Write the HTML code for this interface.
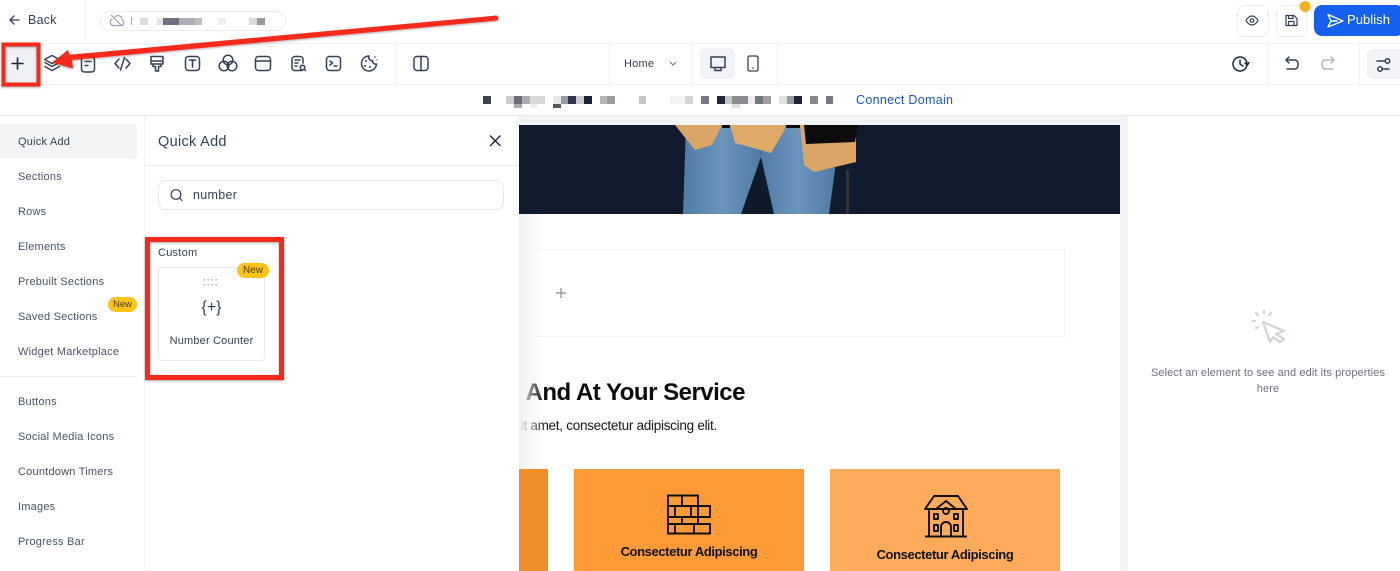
<!DOCTYPE html>
<html><head><meta charset="utf-8"><title>Builder</title>
<style>
html,body{margin:0;padding:0;background:#fff;}
#p{position:relative;width:1400px;height:571px;overflow:hidden;background:#fff;font-family:"Liberation Sans",sans-serif;color:#344054;}
#p div{position:absolute;box-sizing:border-box;white-space:nowrap;}
.nav{left:18px;font-size:11px;letter-spacing:.22px;line-height:14px;color:#475467;}
svg{position:absolute;left:0;top:0;}
.i{fill:none;stroke:#344054;stroke-width:1.5;stroke-linecap:round;stroke-linejoin:round;}
</style></head><body><div id="p">
<!-- canvas -->
<div style="left:518px;top:116px;width:610px;height:455px;background:#f2f3f5"></div>
<div style="left:519px;top:214px;width:601px;height:357px;background:#fff"></div>
<div style="left:519px;top:125px;width:601px;height:89px;background:#101c2e"></div>
<div style="left:1128px;top:116px;width:272px;height:455px;background:#fff"></div>
<!-- section content -->
<div style="left:519px;top:249px;width:546px;height:88px;border:1px solid #f3f3f5;border-left:0"></div>
<div style="left:519px;top:375px;width:226px;height:36px;overflow:hidden"><div style="right:0;top:0;font-size:24px;line-height:36px;font-weight:bold;color:#0b0b0b;letter-spacing:-.5px">Present And At Your Service</div></div>
<div style="left:519px;top:416px;width:198px;height:20px;overflow:hidden"><div style="right:0;top:0;font-size:13.5px;line-height:20px;color:#161616;letter-spacing:-.27px">Lorem ipsum dolor sit amet, consectetur adipiscing elit.</div></div>
<div style="left:519px;top:469px;width:29px;height:102px;background:#ee8f2b"></div>
<div style="left:574px;top:469px;width:230px;height:102px;background:#ff9a36"></div>
<div style="left:830px;top:469px;width:230px;height:102px;background:#ffab5c"></div>
<div style="left:574px;top:543px;width:230px;text-align:center;font-size:13px;line-height:18px;font-weight:bold;color:#111;letter-spacing:-.39px">Consectetur Adipiscing</div>
<div style="left:830px;top:546px;width:230px;text-align:center;font-size:13px;line-height:18px;font-weight:bold;color:#111;letter-spacing:-.39px">Consectetur Adipiscing</div>
<div style="left:519px;top:214px;width:26px;height:255px;background:linear-gradient(90deg,#f1f1f2,rgba(255,255,255,0))"></div>

<svg width="1400" height="571" viewBox="0 0 1400 571">
 <defs><linearGradient id="j" x1="0" x2="1" y1="0" y2="0"><stop offset="0" stop-color="#4f7ba6"/><stop offset=".5" stop-color="#6b95bb"/><stop offset="1" stop-color="#4f7ba6"/></linearGradient></defs>
 <!-- hero figure -->
 <path fill="url(#j)" d="M686 125L683 214H741L761 157L760 125Z"/>
 <path fill="url(#j)" d="M761 157L774 214H829L835 170L832 125H760Z"/>
 <path fill="#0f1a2b" d="M760 160L743 214H773Z"/>
 <path fill="#dba565" d="M675 125H722L712 145L695 150Z"/>
 <path fill="#dfa968" d="M730 125H786L784 131L771 153L735 143Z"/>
 <path fill="#0c0c0c" d="M722 125H730V128H722ZM786 125H800V128H786Z"/>
 <path fill="#dba565" d="M800 125H856V162L814 172L804 165Z"/>
 <path fill="#0c0c0c" d="M804 125H858L855 142L806 144Z"/>
 <path fill="#333" d="M846 170H849V214H846Z"/>
 <!-- plus in section -->
 <path d="M561 288V298M556 293H566" stroke="#868c92" stroke-width="1.2" fill="none"/>
 <!-- brick -->
 <g fill="none" stroke="#111" stroke-width="1.9">
  <path d="M668 495.500H698V506H710V517H698V524H710V533.500H668Z"/>
  <path d="M668 506H698M668 517H710M668 524H710M682 495.500V506M675 506V517M691 506V517M682 517V524M698 506V517M675 524V533.500M694 524V533.500"/>
 </g>
 <!-- house -->
 <g fill="none" stroke="#111" stroke-width="1.9" stroke-linejoin="round">
  <path d="M925 509L934 496H958L967 509Z"/>
  <path d="M929 509V536M963 509V536M925 536.500H967"/>
  <path d="M936 509L946 501L956 509"/>
  <circle cx="946" cy="511" r="3"/>
  <rect x="934" y="514" width="4" height="5"/><rect x="954" y="514" width="4" height="5"/>
  <rect x="934" y="525" width="4" height="6"/><rect x="954" y="525" width="4" height="6"/>
  <path d="M941 536V527A5 5 0 0 1 951 527V536"/>
 </g>
 <!-- pointer in right panel -->
 <g fill="none" stroke="#cfd3da" stroke-width="2.2" stroke-linecap="round" stroke-linejoin="round">
  <path d="M1263 322L1284 331L1276 334L1284 339L1280 342L1273 337L1270 342Z"/>
  <path d="M1264 311V313M1256 313L1258 315M1271 313L1269 315M1253 321H1255M1256 328L1258 327"/>
 </g>
</svg>

<!-- right panel text -->
<div style="left:1148px;top:365px;width:240px;text-align:center;font-size:11px;line-height:16px;color:#6b7280;letter-spacing:.1px;white-space:normal">Select an element to see and edit its properties here</div>

<!-- left panel -->
<div style="left:0;top:116px;width:145px;height:455px;background:#fff;border-right:1px solid #f2f3f4"></div>
<div style="left:145px;top:116px;width:374px;height:455px;background:#fff"></div>
<div style="left:0;top:124px;width:137px;height:35px;background:#f3f4f6;border-radius:0 4px 4px 0"></div>
<div class="nav" style="top:135px;color:#344054">Quick Add</div>
<div class="nav" style="top:170px">Sections</div>
<div class="nav" style="top:205px">Rows</div>
<div class="nav" style="top:240px">Elements</div>
<div class="nav" style="top:275px">Prebuilt Sections</div>
<div class="nav" style="top:310px">Saved Sections</div>
<div class="nav" style="top:345px">Widget Marketplace</div>
<div style="left:0;top:376px;width:137px;height:1px;background:#eef0f2"></div>
<div class="nav" style="top:395px">Buttons</div>
<div class="nav" style="top:430px">Social Media Icons</div>
<div class="nav" style="top:465px">Countdown Timers</div>
<div class="nav" style="top:500px">Images</div>
<div class="nav" style="top:535px">Progress Bar</div>
<div style="left:108px;top:297px;width:29px;height:15px;border-radius:8px;background:#fcc419;font-size:9.5px;line-height:15px;text-align:center;color:#4a3b05">New</div>

<div style="left:145px;top:165px;width:374px;height:1px;background:#eef0f2"></div>
<div style="left:158px;top:133px;font-size:14.5px;line-height:18px;letter-spacing:.3px;color:#344054">Quick Add</div>
<div style="left:158px;top:180px;width:346px;height:30px;border:1px solid #e7e9ed;border-radius:8px"></div>
<div style="left:193px;top:187px;font-size:12.5px;line-height:16px;letter-spacing:.3px;color:#344054">number</div>
<div style="left:158px;top:246px;font-size:11px;line-height:14px;letter-spacing:.25px;color:#344054">Custom</div>
<div style="left:158px;top:267px;width:107px;height:94px;border:1px solid #e9ebee;border-radius:4px;background:#fff"></div>
<div style="left:158px;top:334px;width:107px;text-align:center;font-size:11px;line-height:14px;letter-spacing:.18px;color:#344054">Number Counter</div>
<div style="left:158px;top:298px;width:107px;text-align:center;font-size:16px;line-height:20px;color:#344054">{+}</div>
<div style="left:237px;top:263px;width:32px;height:15px;border-radius:8px;background:#fcc419;font-size:10px;line-height:15px;text-align:center;color:#4a3b05">New</div>

<!-- bars -->
<div style="left:0;top:0;width:1400px;height:44px;background:#fff;border-bottom:1px solid #f0f1f3"></div>
<div style="left:0;top:44px;width:1400px;height:41px;background:#fff;border-bottom:1px solid #f0f1f3"></div>
<div style="left:0;top:85px;width:1400px;height:31px;background:#fff;border-bottom:1px solid #e9eaed"></div>
<div style="left:85px;top:0;width:1px;height:40px;background:#f0f1f3"></div>
<div style="left:396px;top:44px;width:1px;height:40px;background:#f0f1f3"></div>
<div style="left:609px;top:44px;width:1px;height:40px;background:#f0f1f3"></div>
<div style="left:692px;top:44px;width:1px;height:40px;background:#f0f1f3"></div>
<div style="left:777px;top:44px;width:1px;height:40px;background:#f0f1f3"></div>
<div style="left:1268px;top:44px;width:1px;height:40px;background:#f0f1f3"></div>
<div style="left:1359px;top:44px;width:1px;height:40px;background:#f0f1f3"></div>

<div style="left:28px;top:12px;font-size:12.5px;line-height:16px;letter-spacing:.25px;color:#344054">Back</div>
<div style="left:100px;top:11px;width:186px;height:20px;border:1px solid #eceef0;border-radius:10px"></div>
<div style="left:3px;top:45px;width:35px;height:38px;background:#eff1f5"></div>
<div style="left:700px;top:48px;width:35px;height:31px;background:#f1f3f6;border-radius:6px"></div>
<div style="left:1367px;top:49px;width:33px;height:30px;background:#f1f3f6;border-radius:6px 0 0 6px"></div>
<div style="left:624px;top:57px;font-size:11px;line-height:14px;letter-spacing:.2px;color:#344054">Home</div>
<div style="left:1237px;top:5px;width:32px;height:32px;border:1px solid #edeef0;border-radius:8px"></div>
<div style="left:1276px;top:5px;width:31px;height:32px;border:1px solid #edeef0;border-radius:8px"></div>
<div style="left:1314px;top:5px;width:90px;height:31px;background:#1660ee;border-radius:8px"></div>
<div style="left:1347px;top:12px;font-size:13px;line-height:16px;letter-spacing:.05px;color:#fff">Publish</div>
<div style="left:856px;top:92px;font-size:12.5px;line-height:16px;letter-spacing:.3px;color:#1a56c4">Connect Domain</div>

<svg width="1400" height="571" viewBox="0 0 1400 571">
 <!-- back arrow -->
 <path class="i" style="stroke-width:1.3" d="M19 20H10M14 16L10 20L14 24"/>
 <!-- cloud off -->
 <path fill="none" stroke="#9aa0aa" stroke-width="1.2" stroke-linecap="round" d="M111 15L122 26M115 17A4 4 0 0 1 122 20A3 3 0 0 1 122 25.500H114A3.500 3.500 0 0 1 112 19"/>
 <!-- redacted top -->
 <rect x="131" y="17" width="1" height="8" fill="#aaa"/>
 <rect x="140" y="18" width="8" height="7" fill="#dedee0"/>
 <rect x="157" y="18" width="6" height="7" fill="#e5e5e7"/>
 <rect x="163" y="18" width="16" height="7" fill="#6f7180"/>
 <rect x="179" y="18" width="16" height="7" fill="#adaeb3"/>
 <rect x="195" y="18" width="7" height="7" fill="#bdbec2"/>
 <rect x="218" y="18" width="8" height="7" fill="#eeeeef"/>
 <rect x="249" y="18" width="8" height="7" fill="#dcdcde"/>
 <rect x="257" y="18" width="8" height="7" fill="#97989d"/>
 <!-- redacted url row -->
 <g>
  <rect x="483" y="96" width="8" height="8" fill="#3f4450"/>
  <rect x="506" y="96" width="8" height="8" fill="#ccccce"/><rect x="514" y="96" width="8" height="8" fill="#6b6d75"/><rect x="522" y="96" width="8" height="8" fill="#a9abae"/><rect x="530" y="96" width="15" height="8" fill="#d8d8da"/>
  <rect x="553" y="96" width="8" height="8" fill="#e8e8e9"/><rect x="561" y="96" width="8" height="8" fill="#9a9ba0"/><rect x="568" y="96" width="8" height="8" fill="#33364a"/><rect x="576" y="96" width="8" height="8" fill="#cccccf"/><rect x="584" y="96" width="8" height="8" fill="#1d2236"/>
  <rect x="600" y="96" width="7" height="8" fill="#b5b5b8"/><rect x="607" y="96" width="8" height="8" fill="#999ba0"/>
  <rect x="639" y="96" width="7" height="8" fill="#c5c5c8"/>
  <rect x="670" y="96" width="15" height="8" fill="#f3f3f4"/><rect x="685" y="96" width="8" height="8" fill="#d5d5d8"/>
  <rect x="701" y="96" width="8" height="8" fill="#77787f"/>
  <rect x="717" y="96" width="8" height="8" fill="#23273a"/><rect x="725" y="96" width="7" height="8" fill="#c5c5c8"/><rect x="732" y="96" width="16" height="8" fill="#8b8c90"/><rect x="748" y="96" width="7" height="8" fill="#ededee"/><rect x="755" y="96" width="8" height="8" fill="#77787f"/><rect x="763" y="96" width="8" height="8" fill="#a0a0a3"/>
  <rect x="779" y="96" width="8" height="8" fill="#e0e0e1"/><rect x="787" y="96" width="7" height="8" fill="#999a9d"/><rect x="794" y="96" width="8" height="8" fill="#1d2236"/>
  <rect x="810" y="96" width="8" height="8" fill="#88898d"/><rect x="826" y="96" width="7" height="8" fill="#77787f"/>
  <rect x="514" y="104" width="8" height="4" fill="#aaabae"/><rect x="530" y="104" width="7" height="4" fill="#eeeeef"/><rect x="553" y="104" width="8" height="4" fill="#55565f"/><rect x="732" y="104" width="8" height="4" fill="#dddddf"/>
 </g>
 <!-- plus -->
 <path class="i" style="stroke:#1f2937;stroke-width:1.6" d="M17.500 58V69M12 63.500H23"/>
 <!-- layers -->
 <path class="i" d="M52 55.500L59.500 59.500L52 63.500L44.500 59.500ZM45 62.500L52 66.500L59.500 62.500M45 66.500L52 70.500L59.500 66.500"/>
 <!-- form -->
 <rect class="i" x="81.500" y="57" width="13" height="15" rx="3"/><path class="i" d="M85 61.500H91M85 65.500H88"/>
 <!-- code -->
 <path class="i" d="M119 59L115 63.500L119 68M126 59L130 63.500L126 68M124.500 57.500L120.500 70"/>
 <!-- brush -->
 <path class="i" d="M151 56.500H163V64H151ZM151 61H163M153 64V66.500H155.500V71H158.500V66.500H161V64"/>
 <!-- T -->
 <rect class="i" x="185.500" y="56.500" width="14" height="14" rx="3"/><path class="i" style="stroke-width:1.6" d="M189.500 60H195.500M192.500 60V67"/>
 <!-- circles -->
 <circle class="i" cx="228" cy="60" r="4.800"/><circle class="i" cx="224" cy="66" r="4.800"/><circle class="i" cx="232" cy="66" r="4.800"/>
 <!-- window -->
 <rect class="i" x="255.500" y="56.500" width="15" height="14" rx="3"/><path class="i" d="M255.500 61H270.500"/>
 <!-- doc search -->
 <path class="i" d="M302 70.500H294.500A3 3 0 0 1 292 67.500V59A3 3 0 0 1 295 56.500H300A3 3 0 0 1 303 59V63M295 60H300M295 63H298M295 66H297"/>
 <circle class="i" cx="302.500" cy="67.500" r="2.300"/><path class="i" d="M304.500 69.500L305.500 70.500"/>
 <!-- terminal -->
 <rect class="i" x="326.500" y="56.500" width="14" height="14" rx="3"/><path class="i" d="M330 61L332.500 63L330 65M334 66H337"/>
 <!-- cookie -->
 <path class="i" d="M369 56A7.500 7.500 0 1 0 376.500 64A3.200 3.200 0 0 1 372.500 60.500A3.200 3.200 0 0 1 369 56Z"/>
 <g fill="#344054"><circle cx="366" cy="61" r="1"/><circle cx="365" cy="66" r="1"/><circle cx="370" cy="67" r="1"/><circle cx="375" cy="57" r=".8"/><circle cx="377" cy="60" r=".6"/></g>
 <!-- split -->
 <rect class="i" x="414" y="56.500" width="14" height="14" rx="3"/><path class="i" d="M421 56.500V70.500"/>
 <!-- chevron -->
 <path fill="none" stroke="#667085" stroke-width="1" d="M670 62L673 65L676 62"/>
 <!-- desktop -->
 <path class="i" d="M711 57H725V67.500H711ZM715 67.500V70.500H721V67.500"/>
 <!-- mobile -->
 <rect class="i" style="stroke-width:1.3" x="748" y="56" width="10" height="15" rx="1.500"/><circle cx="753" cy="68" r=".8" fill="#344054"/>
 <!-- history -->
 <path class="i" style="stroke:#1f2937" d="M1240 57A7 7 0 1 0 1247 64A7 7 0 0 0 1240 57M1240 60V64L1243 66"/>
 <path class="i" style="stroke:#1f2937" d="M1245 63L1247.500 65L1249 62.500"/>
 <!-- undo redo -->
 <path class="i" d="M1289 57L1286 60L1289 63M1286 60H1295A3.500 3.500 0 0 1 1298 64V65A3.500 3.500 0 0 1 1295 69H1287"/>
 <path class="i" style="stroke:#b3b8c0" d="M1331 57L1334 60L1331 63M1334 60H1325A3.500 3.500 0 0 0 1322 64V65A3.500 3.500 0 0 0 1325 69H1333"/>
 <!-- sliders -->
 <path class="i" d="M1377 61H1385M1389 69H1382"/><circle class="i" cx="1387.500" cy="61" r="2.200"/><circle class="i" cx="1380" cy="69" r="2.200"/>
 <!-- eye -->
 <path class="i" style="stroke-width:1.2" d="M1246 20.500C1248 17 1250 16 1252 16C1254 16 1256 17 1258 20.500C1256 24 1254 25 1252 25C1250 25 1248 24 1246 20.500Z"/><circle class="i" style="stroke-width:1.2" cx="1252" cy="20.500" r="1.800"/>
 <!-- save -->
 <path class="i" style="stroke-width:1.2" d="M1286 15.500H1294L1297 18.500V25.500H1286ZM1288.500 15.500V18.500H1293V15.500M1288.500 25.500V21.500H1294V25.500"/>
 <circle cx="1305" cy="6.500" r="5.500" fill="#fbb024"/>
 <!-- send -->
 <path fill="none" stroke="#fff" stroke-width="1.4" stroke-linejoin="round" stroke-linecap="round" d="M1328 14.500L1343 21L1328 27L1331 21ZM1331 21H1337"/>
 <!-- search -->
 <circle cx="176" cy="194.500" r="4.800" fill="none" stroke="#344054" stroke-width="1.2"/><path d="M179.500 198L182 200.500" stroke="#344054" stroke-width="1.2" stroke-linecap="round"/>
 <!-- close -->
 <path d="M490.500 136L500 145.500M500 136L490.500 145.500" stroke="#1f2937" stroke-width="1.5" stroke-linecap="round"/>
 <!-- drag dots -->
 <g fill="#b5bac1"><rect x="203.500" y="279" width="1.600" height="1.600"/><rect x="207.500" y="279" width="1.600" height="1.600"/><rect x="211.500" y="279" width="1.600" height="1.600"/><rect x="215.500" y="279" width="1.600" height="1.600"/><rect x="203.500" y="284" width="1.600" height="1.600"/><rect x="207.500" y="284" width="1.600" height="1.600"/><rect x="211.500" y="284" width="1.600" height="1.600"/><rect x="215.500" y="284" width="1.600" height="1.600"/></g>
 <!-- red annotations -->
 <defs><filter id="s" x="-10%" y="-10%" width="120%" height="130%"><feDropShadow dx="0" dy="1" stdDeviation="1" flood-color="#000" flood-opacity=".35"/></filter></defs>
 <g filter="url(#s)">
  <rect x="3.500" y="44.500" width="35" height="40" fill="none" stroke="#f5291c" stroke-width="4"/>
  <rect x="147.500" y="239.500" width="134" height="138" fill="none" stroke="#f5291c" stroke-width="5"/>
  <path fill="#f5291c" d="M497 15.500Q499.500 18 497 20.500L72 60L73 68.500L52 62.500L68 50L69.500 54.800Z"/>
 </g>
</svg>
</div></body></html>
